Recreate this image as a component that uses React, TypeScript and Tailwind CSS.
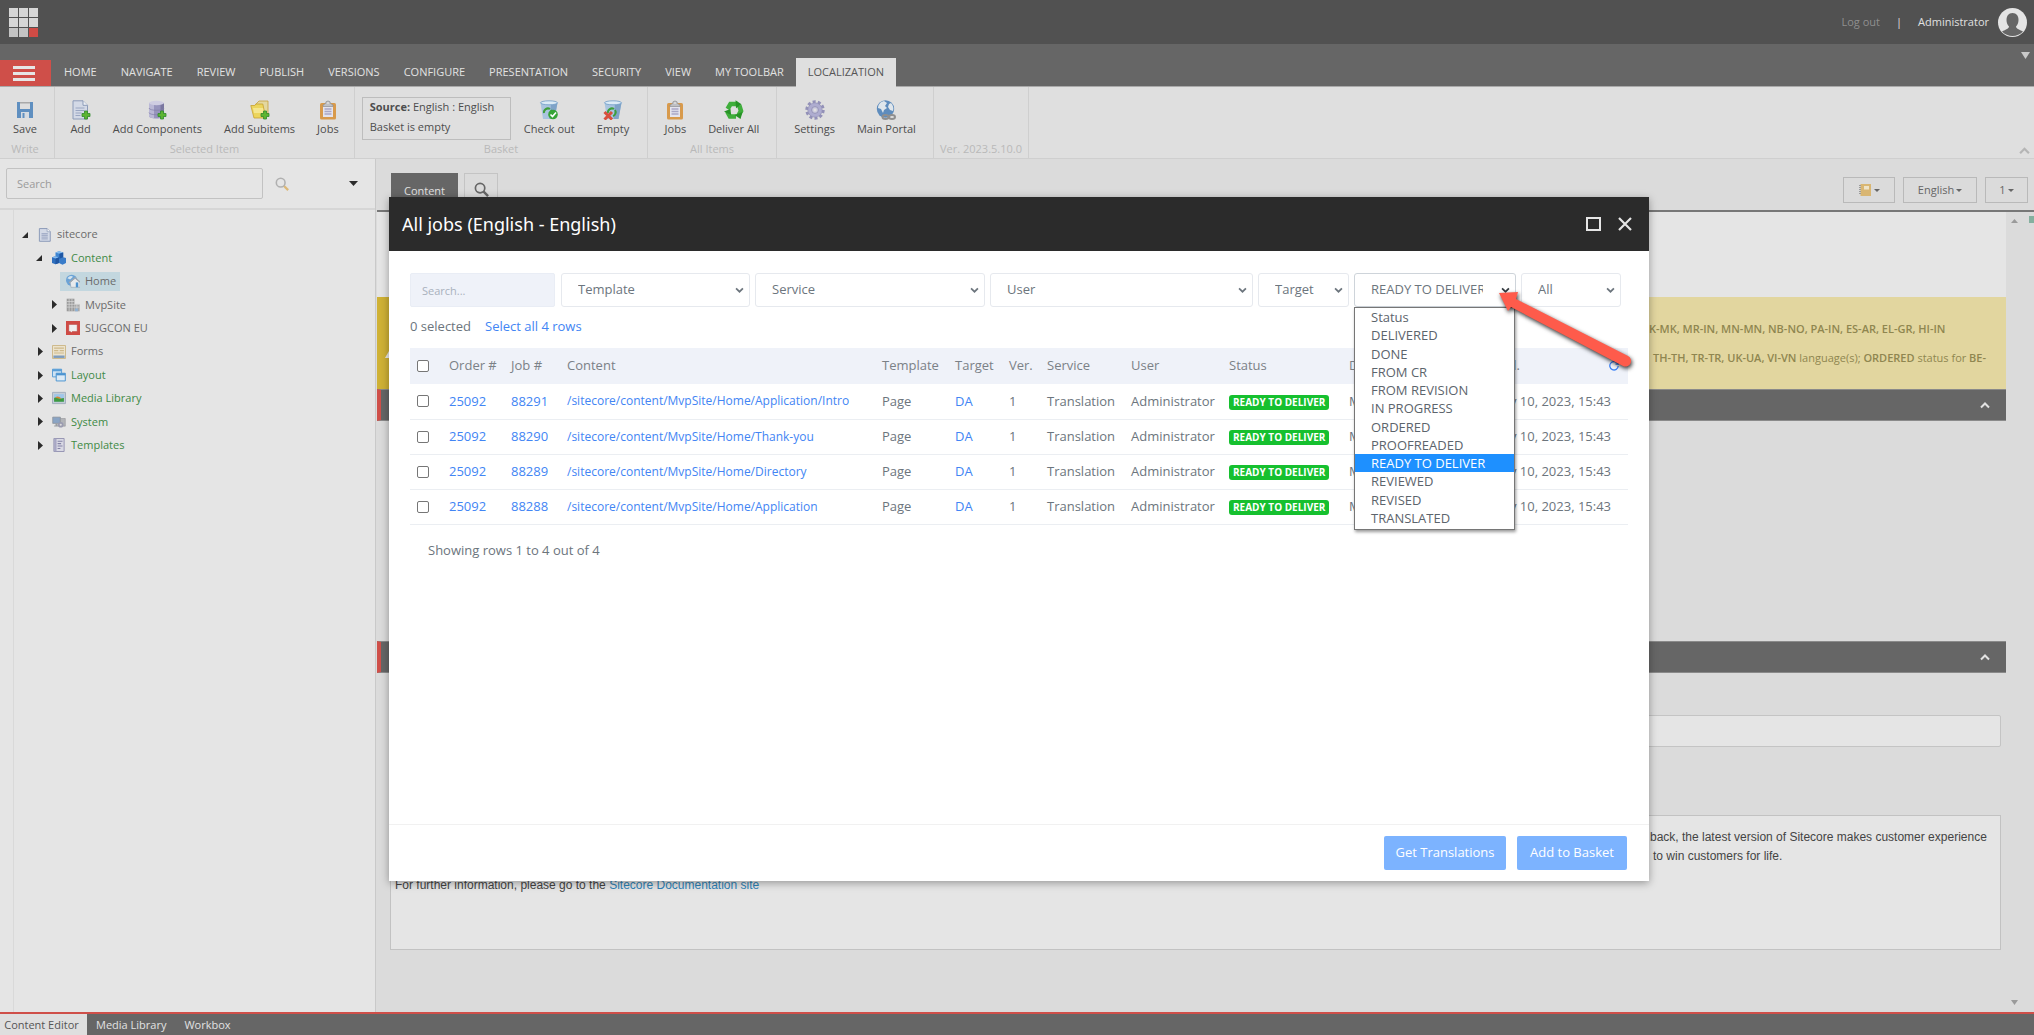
import React from 'react';

type IconName =
  | 'save' | 'docAdd' | 'dbAdd' | 'folderAdd' | 'clipboard' | 'basketOk' | 'basketDel'
  | 'recycle' | 'gear' | 'globe' | 'doc' | 'cubes' | 'home' | 'building' | 'sugcon'
  | 'form' | 'layers' | 'media' | 'system' | 'template';

const Plus = () => (
  <path d="M13.5 11h3v2.500h2.500v3h-2.500V19h-3v-2.500H11v-3h2.500z" fill="#5cb531" stroke="#2f8a2c" strokeWidth="0.8" />
);

const Bin = () => (
  <g>
    <path d="M1.500 2.500 4 19h11.500L18.500 2.500z" fill="#a9c4df" />
    <path d="M12 3 10.500 19h5L18.500 3z" fill="#7fa3c8" />
    <ellipse cx="10" cy="2.800" rx="8.500" ry="2" fill="#dcebf6" stroke="#6f9cc6" strokeWidth="0.8" />
    <path d="M5 13a4 4 0 0 1 6-4M12 10a4 4 0 0 1-2 6" stroke="#3d9e3a" strokeWidth="2" fill="none" />
  </g>
);

const drawings: Record<IconName, React.ReactNode> = {
  save: (
    <g>
      <path d="M2 2h16v16H2z" fill="#5f8fc0" />
      <path d="M5 2h10v7H5z" fill="#dedede" />
      <path d="M5 2h10v1.500H5z" fill="#a9a9a9" />
      <path d="M6 12h8v6H6z" fill="#d5dbe2" />
      <path d="M7.500 13h2v5h-2z" fill="#5f8fc0" />
    </g>
  ),
  docAdd: (
    <g>
      <path d="M2 .8h10l4.500 4.500V19H2z" fill="#d3d9e6" stroke="#8c9bb8" />
      <path d="M12 .8v4.500h4.500" fill="#eef0f5" stroke="#8c9bb8" />
      <path d="M4.500 8h9M4.500 10.500h9M4.500 13h6M4.500 15.500h5" stroke="#9aa6c2" />
      <Plus />
    </g>
  ),
  dbAdd: (
    <g>
      <path d="M2 3v13c0 1.500 3 2.500 7.500 2.500s7.500-1 7.500-2.500V3z" fill="#9794bd" />
      <path d="M2 3v13c0 1.300 2 2.200 5 2.400V4z" fill="#bab8d6" />
      <path d="M13.500 4v14c2-.3 3.500-1 3.500-2V3z" fill="#7a779f" />
      <ellipse cx="9.500" cy="3" rx="7.500" ry="2.200" fill="#cfcde2" />
      <path d="M2 8c0 3 15 3 15 0M2 12.500c0 3 15 3 15 0" stroke="#817ea8" fill="none" strokeWidth="0.7" />
      <Plus />
    </g>
  ),
  folderAdd: (
    <g>
      <path d="M6 4 9 1h9v13H7z" fill="#e3d7a0" stroke="#c4a03e" strokeWidth="0.8" />
      <path d="M.8 5.500h4l1-1.500h7l3 14H4z" fill="#ecd55d" stroke="#c6a131" strokeWidth="0.8" />
      <path d="M3 8h10l1 5H4z" fill="#f4e68f" />
      <Plus />
    </g>
  ),
  clipboard: (
    <g>
      <rect x="2" y="3" width="16" height="16.500" rx="1.500" fill="#d89a4c" />
      <rect x="5" y="6" width="10" height="11" fill="#e4e4ee" />
      <path d="M6.500 9h7M6.500 11.500h7M6.500 14h7" stroke="#a9a7c6" strokeWidth="1.300" />
      <path d="M5 6.500V5l2.500-1.500A2.500 2.500 0 0 1 12.500 3.500L15 5v1.500z" fill="#bfc0c4" stroke="#8e8f94" strokeWidth="0.7" />
      <circle cx="10" cy="3" r="1" fill="#dedede" />
    </g>
  ),
  basketOk: (
    <g>
      <Bin />
      <circle cx="14" cy="14.500" r="4.800" fill="#36a436" />
      <path d="m11.500 14.500 2 2 3.500-4" stroke="#fff" strokeWidth="1.600" fill="none" />
    </g>
  ),
  basketDel: (
    <g>
      <Bin />
      <path d="m1.500 12 7.500 7.500M9 12l-7.500 7.500" stroke="#d84f3c" strokeWidth="3" />
    </g>
  ),
  recycle: (
    <g fill="none" stroke="#3fae3b" strokeWidth="4.600">
      <path d="M3.600 9 6.500 4h7" />
      <path d="m15.300 5.500 1.700 5.500-3 5.300" />
      <path d="M12 16.500H6L3.200 11.500" />
      <path d="m11.500.2 6 4-5.500 4z" fill="#279327" stroke="none" />
      <path d="m18.500 12-2 7-6-4z" fill="#279327" stroke="none" />
      <path d="m0 11.500 6.500-2.500.5 6z" fill="#279327" stroke="none" />
    </g>
  ),
  gear: (
    <g>
      <circle cx="10" cy="10" r="8.200" fill="none" stroke="#9391b8" strokeWidth="3" strokeDasharray="3 2.150" />
      <circle cx="10" cy="10" r="7.200" fill="#aeacd0" stroke="#8d8bb0" strokeWidth="0.6" />
      <circle cx="10" cy="10" r="3.400" fill="#c9c8dc" stroke="#8d8bb0" strokeWidth="0.8" />
      <circle cx="10" cy="10" r="1.500" fill="#dfdfdf" />
    </g>
  ),
  globe: (
    <g>
      <circle cx="9.500" cy="9" r="8.700" fill="#5e8cbd" />
      <path d="M8 1c-4 1-6 4-6 7l3 1 2 4 1-3 3-2-2-2 2-3zM13 4l-1 3 2 3 3 1c1-3 0-6-2-8z" fill="#dfe6ec" />
      <g fill="none" stroke="#8f8f8f" strokeWidth="2">
        <ellipse cx="9.500" cy="17" rx="3" ry="2" />
        <ellipse cx="16" cy="17" rx="3" ry="2" />
      </g>
    </g>
  ),
  doc: (
    <g>
      <path d="M2 .8h11l4.500 4.500V19H2z" fill="#d3d9e6" stroke="#8c9bb8" strokeWidth="1.400" />
      <path d="M13 .8v4.500h4.500" fill="#f2f3f6" stroke="#8c9bb8" />
      <path d="M5 8h9M5 10.500h9M5 13h9M5 15.500h9" stroke="#a5afc9" strokeWidth="1.500" />
    </g>
  ),
  cubes: (
    <g>
      <path d="m5 2 5-1.500L16 2v7l-5.500 2L5 9z" fill="#3f86d2" />
      <path d="m0 9 5-1.500L10 9v8l-5 2-5-2z" fill="#2f6fbe" />
      <path d="m10 10 5-1.500 5 1.500v7l-5 2.500-5-2.500z" fill="#3a7cc9" />
      <path d="m5 2 5-1.500L16 2l-5.500 1.800zM0 9l5-1.500L10 9l-5 1.800z" fill="#86bdf0" />
      <path d="M10.500 4v7L16 9V2zM5 11v8l5-2V9z" fill="#1f57a4" />
    </g>
  ),
  home: (
    <g>
      <circle cx="8" cy="9" r="8" fill="#6ba3d6" />
      <path d="M2 6c3-4 6-4 8-2L6 8z" fill="#d5e4ee" />
      <path d="m6 12 7-6 7 6v7H7z" fill="#e8eaec" stroke="#8a97a5" strokeWidth="0.7" />
      <path d="m4.500 12.500 8.500-7 7 6" fill="none" stroke="#a2a9b0" strokeWidth="1.600" />
      <path d="M14 12h3.500v7H14z" fill="#4b91cf" />
    </g>
  ),
  building: (
    <g>
      <path d="M1 1h11v18H1z" fill="#9a9a9a" />
      <path d="M12 9h7.500v10H12z" fill="#a8a8a8" />
      <path d="M4.500 1v18M8.500 1v18M1 5h11M1 9h18M1 13h18M15.500 9v10" stroke="#dadada" strokeWidth="1" />
      <path d="M13 15h4v4h-4z" fill="#8fb2d4" />
    </g>
  ),
  sugcon: (
    <g>
      <path d="M0 0h20v20H0z" fill="#cf4b45" />
      <path d="M4 5h12v10H9l-1.500 1.500L6 15H4z" fill="#efefef" stroke="#b03a36" strokeWidth="0.6" />
    </g>
  ),
  form: (
    <g>
      <path d="M.7.700h18.600v18.600H.7z" fill="#ece3cd" stroke="#cdb98a" strokeWidth="1.400" />
      <path d="M3 4.500h14M3 8h6M11 8h6M3 11.500h14" stroke="#cdb98a" strokeWidth="1.600" />
      <path d="M2 15h16v3.500H2z" fill="#7f9cbd" />
    </g>
  ),
  layers: (
    <g>
      <path d="M.7 1.700h13v11H.7z" fill="#cfe3f4" stroke="#5a9ed6" strokeWidth="1.400" />
      <path d="M.7 1.700h13v3H.7z" fill="#5a9ed6" />
      <path d="M6 7.500h13v11H6z" fill="#dceaf6" stroke="#4b93d0" strokeWidth="1.400" />
      <path d="M6 7.500h13v3H6z" fill="#4b93d0" />
    </g>
  ),
  media: (
    <g>
      <path d="M.7 2h18.600v16H.7z" fill="#c4cdd8" stroke="#a3afbd" strokeWidth="1.400" />
      <path d="M3 4.500h14v11H3z" fill="#9fc6ea" />
      <path d="M3 10c4-2 7 2 14 0v5.500H3z" fill="#3f9a40" />
      <path d="M5 9c3-3 6 0 8 1s-5 2-8-1z" fill="#d98634" />
    </g>
  ),
  system: (
    <g>
      <path d="M1 3h11v9H1z" fill="#8aa4c4" stroke="#8a8f96" />
      <path d="M5 12h3v3H5zM3 15h7v1.500H3z" fill="#9a9da2" />
      <path d="M12 5h7v11h-7z" fill="#b2b4b8" stroke="#86888c" strokeWidth="0.7" />
      <circle cx="12.500" cy="14" r="4" fill="#9a9bb0" />
      <circle cx="12.500" cy="14" r="1.500" fill="#dcdcdc" />
    </g>
  ),
  template: (
    <g>
      <path d="M2.700.700h14.600v18.600H2.700z" fill="#d9d9e4" stroke="#9695b3" strokeWidth="1.400" />
      <path d="M3 1h3.500v18H3z" fill="#a8a7c4" />
      <path d="M8 4.500h7M8 8h5M8 11.500h7M8 15h4" stroke="#8482a6" strokeWidth="1.500" />
    </g>
  ),
};

function Icon({ name, className }: { name: IconName; className: string }) {
  return (
    <svg viewBox="0 0 20 20" className={className} aria-hidden="true">
      {drawings[name]}
    </svg>
  );
}

function Magnifier({ className, ring, handle }: { className: string; ring: string; handle: string }) {
  return (
    <svg viewBox="0 0 16 16" className={className} fill="none" aria-hidden="true">
      <path d="m10 10 5 5" stroke={handle} strokeWidth="2.600" />
      <circle cx="6.500" cy="6.500" r="5" stroke={ring} strokeWidth="1.800" />
    </svg>
  );
}

const Caret = ({ className }: { className: string }) => (
  <svg viewBox="0 0 8 5" preserveAspectRatio="none" className={className} fill="currentColor" aria-hidden="true">
    <path d="M0 0h8L4 5z" />
  </svg>
);

const Chevron = ({ className }: { className: string }) => (
  <svg viewBox="0 0 10 7" className={className} fill="none" stroke="currentColor" aria-hidden="true">
    <path d="m1 1.500 4 4 4-4" strokeWidth="2" />
  </svg>
);

const ribbonTabs = ['HOME', 'NAVIGATE', 'REVIEW', 'PUBLISH', 'VERSIONS', 'CONFIGURE', 'PRESENTATION', 'SECURITY', 'VIEW', 'MY TOOLBAR'];

function Tool({ icon, label }: { icon: IconName; label: string }) {
  return (
    <button type="button" className="flex shrink-0 flex-col items-center px-[11px] whitespace-nowrap text-[#4d4d4d]">
      <Icon name={icon} className="size-5" />
      <span className="leading-[18px]">{label}</span>
    </button>
  );
}

function Group({ caption, className, children }: { caption: string; className: string; children?: React.ReactNode }) {
  return (
    <section className={`flex flex-col border-r border-[#cfcfcf] ${className}`}>
      <div className="flex h-[54px] items-start justify-center pt-[13px]">{children}</div>
      <div className="text-center leading-4 text-[#b9b9b9]">{caption}</div>
    </section>
  );
}

interface Node { label: string; icon: IconName; depth: 0 | 1 | 2; state: 'open' | 'closed' | 'leaf'; green?: boolean }
const tree: Node[] = [
  { label: 'sitecore', icon: 'doc', depth: 0, state: 'open' },
  { label: 'Content', icon: 'cubes', depth: 1, state: 'open', green: true },
  { label: 'Home', icon: 'home', depth: 2, state: 'leaf' },
  { label: 'MvpSite', icon: 'building', depth: 2, state: 'closed' },
  { label: 'SUGCON EU', icon: 'sugcon', depth: 2, state: 'closed' },
  { label: 'Forms', icon: 'form', depth: 1, state: 'closed' },
  { label: 'Layout', icon: 'layers', depth: 1, state: 'closed', green: true },
  { label: 'Media Library', icon: 'media', depth: 1, state: 'closed', green: true },
  { label: 'System', icon: 'system', depth: 1, state: 'closed', green: true },
  { label: 'Templates', icon: 'template', depth: 1, state: 'closed', green: true },
];
const indent = { 0: 'pl-1.5', 1: 'pl-5', 2: 'pl-[34px]' };

function TreeRow({ node }: { node: Node }) {
  return (
    <li className={`flex items-center ${indent[node.depth]}`}>
      <span className="flex w-3 items-center text-[#2b2b2b]">
        {node.state === 'open' && <svg viewBox="0 0 6 6" className="ml-0.5 size-1.5" fill="currentColor"><path d="M6 0v6H0z" /></svg>}
        {node.state === 'closed' && <svg viewBox="0 0 5 9" className="ml-1 h-[9px] w-[5px]" fill="currentColor"><path d="M0 0v9l5-4.500z" /></svg>}
      </span>
      <a
        href="#item"
        className={`flex h-[19px] items-center gap-[5px] pr-1 pl-1.5 ${node.state === 'leaf' ? 'bg-[#c3d7df]' : ''} ${node.green ? 'text-[#3f8a45]' : 'text-[#6b6b6b]'}`}
      >
        <Icon name={node.icon} className="size-[14px]" />
        {node.label}
      </a>
    </li>
  );
}

function Filter({ label, value, className, dark }: { label: string; value: string; className: string; dark?: boolean }) {
  return (
    <div className={`relative ${className}`}>
      <select
        aria-label={label}
        defaultValue={value}
        className={`h-[34px] w-full appearance-none rounded-[3px] border bg-white pr-8 pl-4 ${dark ? 'border-[#ced4da]' : 'border-[#e6e9ee]'}`}
      >
        <option>{value}</option>
      </select>
      <Chevron className={`pointer-events-none absolute top-[14px] right-[6px] h-[6px] w-[9px] ${dark ? 'text-[#343a40]' : 'text-[#6c757d]'}`} />
    </div>
  );
}

const statuses = ['Status', 'DELIVERED', 'DONE', 'FROM CR', 'FROM REVISION', 'IN PROGRESS', 'ORDERED', 'PROOFREADED', 'READY TO DELIVER', 'REVIEWED', 'REVISED', 'TRANSLATED'];

const jobs = [
  { job: '88291', path: '/sitecore/content/MvpSite/Home/Application/Intro' },
  { job: '88290', path: '/sitecore/content/MvpSite/Home/Thank-you' },
  { job: '88289', path: '/sitecore/content/MvpSite/Home/Directory' },
  { job: '88288', path: '/sitecore/content/MvpSite/Home/Application' },
];

const Tick = ({ label }: { label: string }) => (
  <input type="checkbox" aria-label={label} className="ml-[7px] block size-3 appearance-none rounded-[2px] border border-[#767676] bg-white" />
);

function JobsTable() {
  return (
    <table className="w-full table-fixed text-left whitespace-nowrap">
      <colgroup>
        <col className="w-[39px]" />
        <col className="w-[62px]" />
        <col className="w-[56px]" />
        <col className="w-[315px]" />
        <col className="w-[73px]" />
        <col className="w-[54px]" />
        <col className="w-[38px]" />
        <col className="w-[84px]" />
        <col className="w-[98px]" />
        <col className="w-[120px]" />
        <col className="w-[142px]" />
        <col />
      </colgroup>
      <thead className="bg-[#eff2f9] text-[#7b8187]">
        <tr className="h-9">
          <th><Tick label="Select all" /></th>
          {['Order #', 'Job #', 'Content', 'Template', 'Target', 'Ver.', 'Service', 'User', 'Status', 'Date'].map((h) => (
            <th key={h} className="font-normal">{h}</th>
          ))}
          <th className="font-normal">
            <div className="flex items-center justify-between pr-[9px]">
              Upd.
              <button type="button" aria-label="Refresh" className="text-[#3b82f6]">
                <svg viewBox="0 0 10 10" className="size-2.5" fill="none" stroke="currentColor" strokeWidth="1.300">
                  <path d="M8.800 3A4.200 4.200 0 1 0 9.200 5" />
                  <path d="M6.500 3.200h2.800V.5" />
                </svg>
              </button>
            </div>
          </th>
        </tr>
      </thead>
      <tbody>
        {jobs.map((j) => (
          <tr key={j.job} className="h-[35px] border-b border-[#ebeef2]">
            <td><Tick label={`Select job ${j.job}`} /></td>
            <td><a href="#order" className="text-[#4285f4]">25092</a></td>
            <td><a href="#job" className="text-[#4285f4]">{j.job}</a></td>
            <td className="text-[12px]"><a href="#content" className="text-[#4285f4]">{j.path}</a></td>
            <td>Page</td>
            <td><a href="#target" className="text-[#4285f4]">DA</a></td>
            <td>1</td>
            <td>Translation</td>
            <td>Administrator</td>
            <td>
              <span className="inline-block rounded-[3px] bg-[#16c02f] px-1 text-[10px] leading-[15px] font-bold text-white">READY TO DELIVER</span>
            </td>
            <td>May 10, 2023, 15:43</td>
            <td>May 10, 2023, 15:43</td>
          </tr>
        ))}
      </tbody>
    </table>
  );
}

function Arrow() {
  return (
    <svg viewBox="0 0 150 90" className="pointer-events-none absolute top-3 left-[138px] z-20 h-[90px] w-[150px] drop-shadow-[1px_2px_2px_rgba(0,0,0,0.8)]" aria-hidden="true">
      <path d="M7 8 26 7 24 14 136 71a5.500 5.500 0 0 1-5 10L19 22 16 26z" fill="#fe5b4b" />
    </svg>
  );
}

function JobsDialog() {
  return (
    <div role="dialog" aria-label="All jobs" className="flex h-[684px] w-[1260px] flex-col bg-white shadow-[0_2px_8px_rgba(0,0,0,0.35)]">
      <header className="flex h-[54px] shrink-0 items-center justify-between bg-[#2b2b2b] pr-[17px] pl-[13px] text-white">
        <h1 className="font-['Noto_Sans'] text-[18px]">All jobs (English - English)</h1>
        <div className="flex items-center gap-[17px]">
          <button type="button" aria-label="Maximize" className="h-[14px] w-[15px] border-2 border-[#e6e6e6]" />
          <button type="button" aria-label="Close">
            <svg viewBox="0 0 14 14" className="size-[14px]" stroke="#e6e6e6" strokeWidth="2.200"><path d="m1 1 12 12M13 1 1 13" /></svg>
          </button>
        </div>
      </header>
      <div className="flex min-h-0 flex-1 flex-col px-[21px] pt-[22px] font-['Open_Sans'] text-[13px] text-[#6c757d]">
        <div className="flex gap-[5px] pr-[7px]">
          <input aria-label="Search jobs" placeholder="Search..." className="mr-px h-[34px] w-[145px] rounded-[2px] border border-[#e9edf5] bg-[#eff2f9] px-[11px] text-[11px] placeholder:text-[#a9b1bd]" />
          <Filter label="Template" value="Template" className="w-[189px]" />
          <Filter label="Service" value="Service" className="w-[230px]" />
          <Filter label="User" value="User" className="flex-1" />
          <Filter label="Target" value="Target" className="w-[91px]" />
          <div className="relative">
            <Filter label="Status" value="READY TO DELIVER" className="w-[162px]" dark />
            <ul role="listbox" aria-label="Status options" className="absolute top-[34px] left-0 z-10 grid h-[223px] w-[161px] auto-rows-fr border border-[#767676] bg-white pb-0.5 leading-4 text-[#5c646c] shadow-[1px_2px_3px_rgba(0,0,0,0.4)]">
              {statuses.map((s) => (
                <li
                  key={s}
                  role="option"
                  aria-selected={s === 'READY TO DELIVER'}
                  className={`flex items-center pl-4 ${s === 'READY TO DELIVER' ? 'bg-[#1e90ff] text-white' : ''}`}
                >
                  {s}
                </li>
              ))}
            </ul>
            <Arrow />
          </div>
          <Filter label="Scope" value="All" className="w-[100px]" />
        </div>
        <div className="mt-2.5 mb-[11px] flex h-5 items-center gap-[14px]">
          <span>0 selected</span>
          <a href="#all" className="text-[#4285f4]">Select all 4 rows</a>
        </div>
        <JobsTable />
        <p className="mt-[15px] pl-[18px] leading-5">Showing rows 1 to 4 out of 4</p>
      </div>
      <footer className="flex h-[57px] shrink-0 items-center justify-end gap-[11px] border-t border-[#f1f1f1] pr-[22px] font-['Open_Sans'] text-[13px] text-white">
        <button type="button" className="h-[34px] w-[122px] rounded-[2px] bg-[#7cb3ff]">Get Translations</button>
        <button type="button" className="h-[34px] w-[110px] rounded-[2px] bg-[#7cb3ff]">Add to Basket</button>
      </footer>
    </div>
  );
}

function SectionBar() {
  return (
    <div className="flex h-8 items-center justify-end border-y border-l-4 border-y-[#8a8a8a] border-l-[#cf4f49] bg-[#666] pr-4">
      <button type="button" aria-label="Collapse section" className="text-[#e2e2e2]"><Chevron className="h-[7px] w-[10px] rotate-180" /></button>
    </div>
  );
}

export default function App() {
  return (
    <div className="relative flex min-h-screen flex-col bg-[#dbdbdb] font-['Open_Sans',sans-serif] text-[11px]">
      <header className="flex h-11 items-center justify-between bg-[#515151] pr-[7px] pl-[9px]">
        <svg viewBox="0 0 29 29" className="size-[29px]" aria-label="Sitecore">
          {[0, 1, 2].map((r) => [0, 1, 2].map((c) => (
            <rect key={`${r}${c}`} x={c * 10} y={r * 10} width="9" height="9" fill={r === 2 && c === 2 ? '#cf4b45' : r === 2 ? '#c3c3c3' : '#d6d6d6'} />
          )))}
        </svg>
        <div className="flex items-center text-[#e0e0e0]">
          <a href="#logout" className="text-[#8f8f8f]">Log out</a>
          <span className="mx-4">|</span>
          <span>Administrator</span>
          <svg viewBox="0 0 29 29" className="ml-[9px] size-[29px]" aria-label="User avatar">
            <circle cx="14.500" cy="14.500" r="14.500" fill="#e4e4e4" />
            <path d="M14.500 5c4 0 6 3 6 7 0 3-1 5-2.500 6.500 0 2 3 3 7 5A14.500 14.500 0 0 1 4 23.500c4-2 7-3 7-5C9.500 17 8.500 15 8.500 12c0-4 2-7 6-7" fill="#666" />
          </svg>
        </div>
      </header>

      <nav className="flex h-[43px] items-end border-b border-[#a9a9a9] bg-[#666] text-[#e2e2e2]">
        <button type="button" aria-label="Menu" className="mr-px flex h-[26px] w-[51px] flex-col items-center justify-center gap-[3px] bg-[#cf4f49] pr-1">
          <span className="h-[3px] w-[22px] bg-[#e6e6e6]" />
          <span className="h-[3px] w-[22px] bg-[#e6e6e6]" />
          <span className="h-[3px] w-[22px] bg-[#e6e6e6]" />
        </button>
        {ribbonTabs.map((t) => (
          <button key={t} type="button" className="h-7 px-3">{t}</button>
        ))}
        <button type="button" className="-mb-px h-[29px] bg-[#dfdfdf] px-3 text-[#555]">LOCALIZATION</button>
        <button type="button" aria-label="Ribbon options" className="mr-1 mb-[27px] ml-auto text-[#c9c9c9]"><Caret className="h-[7px] w-[9px]" /></button>
      </nav>

      <div className="flex h-[72px] border-b border-[#cfcfcf] bg-[#dfdfdf]">
        <Group caption="Write" className="w-[55px] pr-1"><Tool icon="save" label="Save" /></Group>
        <Group caption="Selected Item" className="w-[300px]">
          <Tool icon="docAdd" label="Add" />
          <Tool icon="dbAdd" label="Add Components" />
          <Tool icon="folderAdd" label="Add Subitems" />
          <Tool icon="clipboard" label="Jobs" />
        </Group>
        <Group caption="Basket" className="w-[293px]">
          <div className="mr-0.5 -mt-[3px] h-[43px] w-[149px] border border-[#bdbdbd] pl-[7px] leading-5 text-[#4d4d4d]">
            <p className="-mt-px"><b>Source:</b> English : English</p>
            <p>Basket is empty</p>
          </div>
          <Tool icon="basketOk" label="Check out" />
          <Tool icon="basketDel" label="Empty" />
        </Group>
        <Group caption="All Items" className="w-[129px]">
          <Tool icon="clipboard" label="Jobs" />
          <Tool icon="recycle" label="Deliver All" />
        </Group>
        <Group caption="" className="w-[157px]">
          <Tool icon="gear" label="Settings" />
          <Tool icon="globe" label="Main Portal" />
        </Group>
        <Group caption="Ver. 2023.5.10.0" className="w-[95px]" />
        <button type="button" aria-label="Collapse ribbon" className="mr-1 mb-[3px] ml-auto self-end text-[#b5b5b5]"><Chevron className="h-2 w-[11px] rotate-180" /></button>
      </div>

      <div className="flex flex-1">
        <aside className="flex w-[376px] shrink-0 flex-col border-r border-[#c9c9c9] bg-[#e5e5e5]">
          <div className="flex h-[51px] items-center border-b-2 border-[#d6d6d6] pl-1.5">
            <input aria-label="Search content" placeholder="Search" className="h-[31px] w-[257px] rounded-[2px] border border-[#c2c2c2] bg-[#e5e5e5] px-[10px] placeholder:text-[#9b9b9b]" />
            <button type="button" aria-label="Run search" className="ml-3"><Magnifier className="size-[14px]" ring="#b0b0b0" handle="#dcb877" /></button>
            <button type="button" aria-label="Search options" className="mr-[17px] ml-auto text-[#2b2b2b]"><Caret className="h-[5px] w-[9px]" /></button>
          </div>
          <div className="ml-[13px] flex-1 border-l border-[#d9d9d9] pt-[13px]">
            <ul className="grid h-[234px] auto-rows-fr">
              {tree.map((n) => <TreeRow key={n.label} node={n} />)}
            </ul>
          </div>
        </aside>

        <main className="flex min-w-0 flex-1 flex-col pl-px">
          <div className="flex h-[53px] items-end justify-between border-b-2 border-[#777] pr-[6px] pl-[14px]">
            <div className="flex gap-1.5 self-stretch pt-[14px]">
              <button type="button" className="w-[67px] bg-[#666] text-[#e2e2e2]">Content</button>
              <button type="button" aria-label="Search tab" className="mb-1 flex w-[34px] items-center justify-center border border-[#c4c4c4]"><Magnifier className="size-[15px]" ring="#666" handle="#666" /></button>
            </div>
            <div className="mb-[7px] flex gap-2 text-[#666]">
              <button type="button" aria-label="Notes" className="flex h-[26px] w-[52px] items-center justify-center gap-[3px] border border-[#b9b9b9]">
                <svg viewBox="0 0 12 12" className="size-3"><path d="M1.500 0H12v12H1.500z" fill="#d9b672" /><path d="M5 2h5v3.500H5z" fill="#eee3c8" /><path d="M1 1v10" stroke="#999" strokeWidth="2" strokeDasharray="1 1" /></svg>
                <Caret className="h-[3px] w-1.5" />
              </button>
              <button type="button" className="flex h-[26px] w-[74px] items-center justify-center gap-0.5 border border-[#b9b9b9]">English<Caret className="h-[3px] w-1.5" /></button>
              <button type="button" className="flex h-[26px] w-[43px] items-center justify-center gap-0.5 border border-[#b9b9b9]">1<Caret className="h-[3px] w-1.5" /></button>
            </div>
          </div>

          <div className="flex flex-1">
            <div className="min-w-0 flex-1">
              <div className="h-[85px] bg-[#e5e5e5]" />
              <div className="flex h-[92px] bg-[#e2d69f] text-[#8f8650]">
                <div className="flex w-[60px] items-center bg-[#cfb135] pl-2 text-[#e8e8e8]">
                  <svg viewBox="0 0 16 14" className="mt-4 h-[14px] w-4" fill="currentColor"><path d="M8 0 16 14H0z" /></svg>
                </div>
                <div className="ml-auto w-[357px] pt-[17px] leading-[29px] font-semibold whitespace-nowrap">
                  <p>K-MK, MR-IN, MN-MN, NB-NO, PA-IN, ES-AR, EL-GR, HI-IN</p>
                  <p className="pl-1">TH-TH, TR-TR, UK-UA, VI-VN <span className="font-normal">language(s);</span> ORDERED <span className="font-normal">status for</span> BE-</p>
                </div>
              </div>
              <SectionBar />
              <div className="h-[220px]" />
              <SectionBar />
              <div className="flex flex-col pt-[42px] pr-[5px] pl-[13px]">
                <input aria-label="Title" className="h-8 rounded-[2px] border border-[#c4c4c4] bg-[#e5e5e5]" />
                <article className="mt-[68px] h-[135px] border border-[#c2c2c2] bg-[#e5e5e5] font-['Liberation_Sans'] text-[12px] leading-[19px] text-[#444]">
                  <div className="ml-auto w-[350px] pt-3 whitespace-nowrap">
                    <p>back, the latest version of Sitecore makes customer experience</p>
                    <p className="pl-[3px]">to win customers for life.</p>
                  </div>
                  <p className="mt-[10px] pl-1">For further information, please go to the <a href="#docs" className="text-[#2f82b5]">Sitecore Documentation site</a></p>
                </article>
              </div>
            </div>
            <div className="flex w-[28px] shrink-0 justify-between">
              <div className="flex w-4 flex-col items-center justify-between pt-[7px] pb-[7px] text-[#9a9a9a]">
                <Caret className="h-1 w-[7px] rotate-180" />
                <Caret className="h-[5px] w-[7px]" />
              </div>
              <span className="mt-1 h-[7px] w-[5px] bg-[#85b09f]" />
            </div>
          </div>
        </main>
      </div>

      <footer className="flex h-[23px] border-t-2 border-[#cf4f49] bg-[#666] text-[#e2e2e2]">
        <button type="button" className="w-[87px] bg-[#dfdfdf] pt-0.5 pr-1 text-[#555]">Content Editor</button>
        <button type="button" className="px-[9px] pt-0.5">Media Library</button>
        <button type="button" className="px-[9px] pt-0.5">Workbox</button>
      </footer>

      <div className="absolute inset-x-0 top-[197px] flex justify-center pl-1">
        <JobsDialog />
      </div>
    </div>
  );
}
